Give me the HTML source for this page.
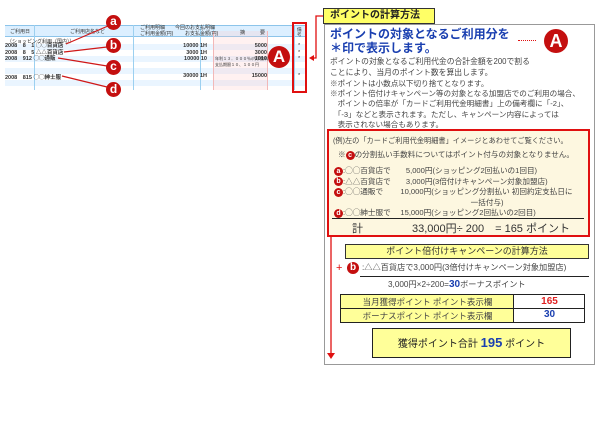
<!DOCTYPE html>
<html><head><meta charset="utf-8"><style>
*{margin:0;padding:0;box-sizing:border-box}
body{width:600px;height:440px;background:#fff;position:relative;overflow:hidden;font-family:"Liberation Sans","Noto Sans CJK JP",sans-serif;color:#333}
.a{position:absolute;white-space:nowrap}
.c{position:absolute;border-radius:50%;background:#c40f0f;color:#fff;font-weight:bold;text-align:center}
.t{font-size:7px;color:#333}
.s{font-size:8px;line-height:10.5px;color:#444}
.m{display:inline-block;width:9px;height:9px;border-radius:50%;background:#c40f0f;color:#fff;font-size:7px;line-height:9px;text-align:center;font-weight:bold;vertical-align:middle}
</style></head><body>
<!-- left table -->
<div class="a" style="left:5px;top:25px;width:301px;height:12px;background:#dcefff;border-top:1px solid #8cc4ea;border-bottom:1px solid #8cc4ea"></div>
<div class="a" style="left:5px;top:38px;width:301px;height:52px;background:repeating-linear-gradient(#fff 0 6px,#eaf5ff 6px 12px)"></div>
<div class="a" style="left:34px;top:25px;width:1px;height:65px;background:#9cd0f0"></div>
<div class="a" style="left:133px;top:25px;width:1px;height:65px;background:#9cd0f0"></div>
<div class="a" style="left:200px;top:25px;width:1px;height:65px;background:#9cd0f0"></div>
<div class="a" style="left:213px;top:25px;width:1px;height:65px;background:#9cd0f0"></div>
<div class="a" style="left:213px;top:31px;width:55px;height:59px;background:rgba(255,200,200,.25);border-left:1px solid #f2b8b8;border-right:1px solid #f2b8b8"></div>
<div class="a" style="left:294px;top:25px;width:1px;height:65px;background:#9cd0f0"></div>
<div class="a t" style="left:10px;top:28px;font-size:5px">ご利用日</div>
<div class="a t" style="left:70px;top:28px;font-size:5px">ご利用店名など</div>
<div class="a t" style="left:140px;top:25px;font-size:5px;line-height:6px">ご利用明細<br>ご利用金額(円)</div>
<div class="a t" style="left:175px;top:25px;font-size:5px;line-height:6px">今回のお支払明細<br>　　お支払金額(円)</div>
<div class="a t" style="left:240px;top:29px;font-size:5px">摘　　　要</div>
<div class="a t" style="left:297px;top:27px;font-size:4.5px;line-height:5px">備<br>考</div>
<div class="a t" style="left:7px;top:38px;font-size:5px">（ショッピング利用（国内））</div>
<div class="a t" style="left:5px;top:43px;font-size:5.5px;line-height:6.5px;font-weight:bold">2008　8　1 ◯◯百貨店<br>2008　8　5 △△百貨店<br>2008　912 ◯◯通販</div>
<div class="a t" style="left:5px;top:73px;font-size:5.5px;font-weight:bold">2008　815 ◯◯紳士服</div>
<div class="a t" style="left:147px;top:43px;font-size:5.5px;line-height:6.5px;font-weight:bold;text-align:right;width:60px">10000 1H<br>3000 1H<br>10000 10</div>
<div class="a t" style="left:147px;top:73px;font-size:5.5px;font-weight:bold;text-align:right;width:60px">30000 1H</div>
<div class="a t" style="left:210px;top:43px;font-size:5.5px;line-height:6.5px;font-weight:bold;text-align:right;width:57px">5000<br>3000<br>1010</div>
<div class="a t" style="left:210px;top:73px;font-size:5.5px;font-weight:bold;text-align:right;width:57px">15000</div>
<div class="a t" style="left:215px;top:56px;font-size:4px;line-height:6px">年利１３．０００％/内手数料<br>支払期限１０、１００円</div>
<div class="a t" style="left:298px;top:43px;font-size:5.5px;line-height:6.5px">*<br>*<br>*</div>
<div class="a t" style="left:298px;top:73px;font-size:5.5px">*</div>
<div class="a" style="left:292px;top:22px;width:15px;height:71px;border:2px solid #e01010"></div>
<svg class="a" style="left:0;top:0" width="320" height="100"><g stroke="#d01818" stroke-width="1.2" fill="none"><line x1="66" y1="44" x2="108" y2="26"/><line x1="64" y1="52" x2="107" y2="47"/><line x1="58" y1="58" x2="107" y2="66"/><line x1="62" y1="76" x2="107" y2="87"/></g></svg>
<div class="c" style="left:106px;top:15px;width:15px;height:15px;font-size:12px;line-height:13px">a</div>
<div class="c" style="left:106px;top:38px;width:15px;height:15px;font-size:12px;line-height:14px">b</div>
<div class="c" style="left:106px;top:60px;width:15px;height:15px;font-size:12px;line-height:13px">c</div>
<div class="c" style="left:106px;top:82px;width:15px;height:15px;font-size:12px;line-height:14px">d</div>
<div class="c" style="left:268px;top:46px;width:22px;height:22px;font-size:17px;line-height:22px">A</div>
<!-- right -->
<div class="a" style="left:324px;top:24px;width:271px;height:341px;border:1px solid #999"></div>
<div class="a" style="left:323px;top:8px;width:112px;height:16px;background:#ffff66;border:1px solid #333;font-size:10px;font-weight:bold;color:#222;padding-left:6px;line-height:14px">ポイントの計算方法</div>
<svg class="a" style="left:308px;top:10px" width="20" height="55"><path d="M15 6 H8 V48 H4" stroke="#e01010" stroke-width="1.3" fill="none"/><path d="M1 48 L6 45 L6 51 Z" fill="#e01010"/></svg>
<div class="a" style="left:330px;top:27px;font-size:12px;line-height:14px;font-weight:bold;color:#1a3fb0">ポイントの対象となるご利用分を<br>＊印で表示します。</div>
<div class="a" style="left:518px;top:40px;width:18px;border-top:1px dotted #e01010"></div>
<div class="c" style="left:544px;top:29px;width:24px;height:24px;font-size:18px;line-height:24px">A</div>
<div class="a s" style="left:330px;top:56px;line-height:11px;font-size:7.8px">ポイントの対象となるご利用代金の合計金額を200で割る<br>ことにより、当月のポイント数を算出します。</div>
<div class="a s" style="left:330px;top:79px;font-size:7.6px;line-height:10.2px">※ポイントは小数点以下切り捨てとなります。<br>※ポイント倍付けキャンペーン等の対象となる加盟店でのご利用の場合、<br>　ポイントの倍率が「カードご利用代金明細書」上の備考欄に「-2」、<br>　「-3」などと表示されます。ただし、キャンペーン内容によっては<br>　表示されない場合もあります。</div>
<div class="a" style="left:327px;top:129px;width:263px;height:108px;background:#fdf7e0;border:2px solid #e01010"></div>
<div class="a s" style="left:333px;top:136px;font-size:7.2px">(例)左の「カードご利用代金明細書」イメージとあわせてご覧ください。</div>
<div class="a s" style="left:338px;top:150px;font-size:7.6px">※<span class="m">c</span>の分割払い手数料についてはポイント付与の対象となりません。</div>
<div class="a s" style="left:334px;top:166px;font-size:7.6px;line-height:10.6px"><span class="m">a</span>:◯◯百貨店で　　5,000円(ショッピング2回払いの1回目)<br><span class="m">b</span>:△△百貨店で　　3,000円(3倍付けキャンペーン対象加盟店)<br><span class="m">c</span>:◯◯通販で　　 10,000円(ショッピング分割払い 初回約定支払日に<br>　　　　　　　　　　　　　　　　　　一括付与)<br><span class="m">d</span>:◯◯紳士服で　 15,000円(ショッピング2回払いの2回目)</div>
<div class="a" style="left:332px;top:218px;width:252px;border-top:1px solid #222"></div>
<div class="a" style="left:352px;top:220px;font-size:11px;color:#333">計</div>
<div class="a" style="left:412px;top:220px;font-size:11px;color:#333">33,000円÷ 200　= 165 ポイント</div>
<svg class="a" style="left:325px;top:236px" width="12" height="126"><line x1="6" y1="0" x2="6" y2="118" stroke="#e01010" stroke-width="1.3"/><path d="M2 117 L10 117 L6 123 Z" fill="#e01010"/></svg>
<div class="a" style="left:345px;top:244px;width:244px;height:15px;background:#ffff99;border:1px solid #333;font-size:9px;text-align:center;line-height:13px;color:#333">ポイント倍付けキャンペーンの計算方法</div>
<div class="a" style="left:336px;top:262px;font-size:11px;color:#e01010">+</div>
<div class="c" style="left:347px;top:262px;width:12px;height:12px;font-size:10px;line-height:11px">b</div>
<div class="a s" style="left:362px;top:263px;font-size:8.2px">:△△百貨店で3,000円(3倍付けキャンペーン対象加盟店)</div>
<div class="a" style="left:360px;top:276px;width:229px;border-top:1px solid #222"></div>
<div class="a s" style="left:388px;top:280px;font-size:8.2px">3,000円×2÷200=<b style="color:#1a3fb0;font-size:10px">30</b>ボーナスポイント</div>
<div class="a" style="left:340px;top:294px;width:245px;height:29px;border:1px solid #222;background:#fff"></div>
<div class="a" style="left:341px;top:295px;width:173px;height:27px;background:#ffff99;border-right:1px solid #222"></div>
<div class="a" style="left:341px;top:308px;width:243px;border-top:1px solid #222"></div>
<div class="a s" style="left:341px;top:297px;width:173px;text-align:center;font-size:8.5px">当月獲得ポイント ポイント表示欄</div>
<div class="a s" style="left:341px;top:311px;width:173px;text-align:center;font-size:8.5px">ボーナスポイント ポイント表示欄</div>
<div class="a" style="left:515px;top:296px;width:69px;text-align:center;font-size:10px;font-weight:bold;color:#e02020">165</div>
<div class="a" style="left:515px;top:309px;width:69px;text-align:center;font-size:10px;font-weight:bold;color:#1a3fb0">30</div>
<div class="a" style="left:372px;top:328px;width:199px;height:30px;background:#ffff99;border:1px solid #222;text-align:center;font-size:10px;line-height:28px;color:#222">獲得ポイント合計 <b style="color:#1a3fb0;font-size:13px">195</b> ポイント</div>
</body></html>
